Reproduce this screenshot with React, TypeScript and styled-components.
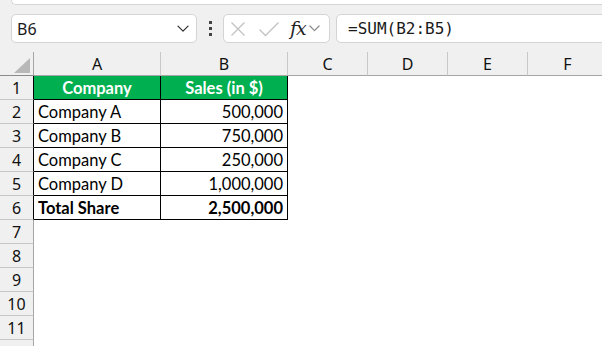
import React from "react";
import styled, { createGlobalStyle } from "styled-components";

const GlobalStyle = createGlobalStyle`
  html, body {
    margin: 0;
    padding: 0;
    background: #f0f0f0;
    overflow: hidden;
  }
  * {
    box-sizing: border-box;
  }
`;

const Page = styled.div`
  width: 602px;
  height: 346px;
  overflow: hidden;
  background: #f0f0f0;
  font-family: "Noto Sans", "Open Sans", sans-serif;
`;

const TopStrip = styled.div`
  height: 5px;
  margin-left: 11px;
  background: #ffffff;
  border-left: 1px solid #d6d6d6;
  border-bottom: 1px solid #d6d6d6;
  border-bottom-left-radius: 7px;
`;

const Toolbar = styled.div`
  display: flex;
  align-items: center;
  height: 29px;
  margin: 9px 0 9px 11px;
`;

const NameBox = styled.div`
  width: 186px;
  height: 29px;
  display: flex;
  align-items: center;
  justify-content: space-between;
  padding: 0 7px 0 5px;
  background: #ffffff;
  border: 1px solid #d4d4d4;
  border-radius: 5px;
  font-size: 16px;
  color: #1a1a1a;
`;

const Dots = styled.div`
  width: 26px;
  display: flex;
  flex-direction: column;
  align-items: center;
  gap: 3px;

  span {
    width: 3px;
    height: 3px;
    background: #444;
  }
`;

const FxBox = styled.div`
  width: 107px;
  height: 29px;
  display: flex;
  align-items: center;
  padding: 0 4px 0 6px;
  background: #ffffff;
  border: 1px solid #d4d4d4;
  border-radius: 5px;
`;

const FxLabel = styled.span`
  font-family: "DejaVu Serif", "Liberation Serif", serif;
  font-style: italic;
  font-size: 19px;
  line-height: 1;
  color: #222;
  margin: 0 3px 0 10px;
  letter-spacing: -1px;
`;

const FormulaBar = styled.div`
  flex: 1;
  height: 29px;
  margin-left: 6px;
  margin-right: -12px;
  display: flex;
  align-items: center;
  padding-left: 11px;
  background: #ffffff;
  border: 1px solid #d4d4d4;
  border-radius: 5px;
  font-family: "DejaVu Sans Mono", "Liberation Mono", monospace;
  font-size: 16px;
  color: #1a1a1a;
`;

const Sheet = styled.div`
  display: grid;
  grid-template-columns: 34px 127px 127px 80px 80px 80px 80px;
  grid-auto-rows: 24px;
  background: #ffffff;
`;

const Corner = styled.div`
  background: #f0f0f0;
  border-right: 1px solid #a6a6a6;
  border-bottom: 1px solid #8a8a8a;
  position: relative;
`;

const ColHead = styled.div`
  display: flex;
  align-items: center;
  justify-content: center;
  background: #f0f0f0;
  border-right: 1px solid #c8c8c8;
  border-bottom: 1px solid #a6a6a6;
  font-size: 16px;
  color: #111;
`;

const RowHead = styled.div<{ $dark?: boolean }>`
  display: flex;
  align-items: center;
  justify-content: center;
  background: #f0f0f0;
  border-right: 1px solid ${(p) => (p.$dark ? "#000000" : "#a6a6a6")};
  border-bottom: 1px solid #c6c6c6;
  font-size: 16px;
  color: #111;
`;

type CellKind = "head" | "text" | "num" | "empty";

const Cell = styled.div<{ $kind: CellKind; $bold?: boolean }>`
  display: flex;
  align-items: center;
  justify-content: ${(p) =>
    p.$kind === "head" ? "center" : p.$kind === "num" ? "flex-end" : "flex-start"};
  padding: 0 4px;
  font-family: "Lato", "Liberation Sans", sans-serif;
  font-size: 16.5px;
  font-weight: ${(p) => (p.$bold || p.$kind === "head" ? 700 : 400)};
  color: ${(p) => (p.$kind === "head" ? "#ffffff" : "#000000")};
  background: ${(p) => (p.$kind === "head" ? "#00b050" : "#ffffff")};
  border-right: ${(p) => (p.$kind === "empty" ? "none" : "1px solid #000")};
  border-bottom: ${(p) => (p.$kind === "empty" ? "none" : "1px solid #000")};
  white-space: nowrap;
`;

const columns = ["A", "B", "C", "D", "E", "F"];

const data: { name: string; sales: string; kind: "head" | "row" | "total" }[] = [
  { name: "Company", sales: "Sales (in $)", kind: "head" },
  { name: "Company A", sales: "500,000", kind: "row" },
  { name: "Company B", sales: "750,000", kind: "row" },
  { name: "Company C", sales: "250,000", kind: "row" },
  { name: "Company D", sales: "1,000,000", kind: "row" },
  { name: "Total Share", sales: "2,500,000", kind: "total" },
];

const Chevron = ({ size = 12, color = "#333" }: { size?: number; color?: string }) => (
  <svg width={size} height={size * 0.6} viewBox="0 0 12 7" fill="none">
    <path d="M1 1l5 5 5-5" stroke={color} strokeWidth="1.3" strokeLinecap="round" strokeLinejoin="round" />
  </svg>
);

const CancelIcon = () => (
  <svg width="16" height="16" viewBox="0 0 16 16" fill="none">
    <path d="M1.5 1.5l13 13M14.5 1.5l-13 13" stroke="#c2c2c2" strokeWidth="1.3" />
  </svg>
);

const EnterIcon = () => (
  <svg width="22" height="16" viewBox="0 0 22 16" fill="none" style={{ marginLeft: 12 }}>
    <path d="M1.5 8.5l6 6L20.5 1.5" stroke="#c2c2c2" strokeWidth="1.3" />
  </svg>
);

const SelectAll = () => (
  <svg width="34" height="24" viewBox="0 0 34 24" style={{ position: "absolute", left: 0, top: 0 }}>
    <polygon points="14,21 30,21 30,6" fill="#b8b8b8" />
  </svg>
);

export default function App() {
  const extraRows = [7, 8, 9, 10, 11];

  return (
    <Page>
      <GlobalStyle />
      <TopStrip />
      <Toolbar>
        <NameBox>
          <span>B6</span>
          <Chevron size={12} color="#333" />
        </NameBox>
        <Dots>
          <span />
          <span />
          <span />
        </Dots>
        <FxBox>
          <CancelIcon />
          <EnterIcon />
          <FxLabel>fx</FxLabel>
          <Chevron size={11} color="#888" />
        </FxBox>
        <FormulaBar>=SUM(B2:B5)</FormulaBar>
      </Toolbar>

      <Sheet>
        <Corner>
          <SelectAll />
        </Corner>
        {columns.map((c) => (
          <ColHead key={c}>{c}</ColHead>
        ))}

        {data.map((row, i) => (
          <React.Fragment key={i}>
            <RowHead $dark>{i + 1}</RowHead>
            <Cell $kind={row.kind === "head" ? "head" : "text"} $bold={row.kind === "total"}>
              {row.name}
            </Cell>
            <Cell $kind={row.kind === "head" ? "head" : "num"} $bold={row.kind === "total"}>
              {row.sales}
            </Cell>
            {columns.slice(2).map((c) => (
              <Cell key={c} $kind="empty" />
            ))}
          </React.Fragment>
        ))}

        {extraRows.map((n) => (
          <React.Fragment key={n}>
            <RowHead>{n}</RowHead>
            {columns.map((c) => (
              <Cell key={c} $kind="empty" />
            ))}
          </React.Fragment>
        ))}

        {/* row 12 only peeks in at the bottom edge */}
        <RowHead />
        {columns.map((c) => (
          <Cell key={c} $kind="empty" />
        ))}
      </Sheet>
    </Page>
  );
}
